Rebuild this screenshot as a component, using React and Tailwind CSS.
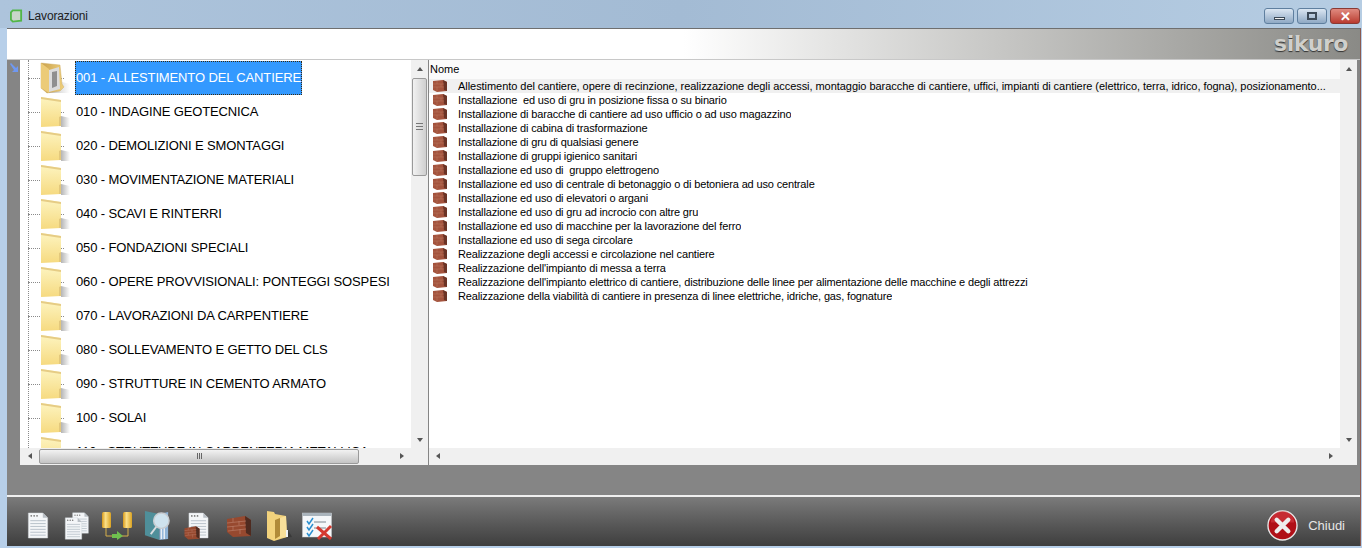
const gruppi = [
  '001 - ALLESTIMENTO DEL CANTIERE',
  '010 - INDAGINE GEOTECNICA',
  '020 - DEMOLIZIONI E SMONTAGGI',
  '030 - MOVIMENTAZIONE MATERIALI',
  '040 - SCAVI E RINTERRI',
  '050 - FONDAZIONI SPECIALI',
  '060 - OPERE PROVVISIONALI: PONTEGGI SOSPESI',
  '070 - LAVORAZIONI DA CARPENTIERE',
  '080 - SOLLEVAMENTO E GETTO DEL CLS',
  '090 - STRUTTURE IN CEMENTO ARMATO',
  '100 - SOLAI',
  '110 - STRUTTURE IN CARPENTERIA METALLICA',
];

const lavorazioni = [
  'Allestimento del cantiere, opere di recinzione, realizzazione degli accessi, montaggio baracche di cantiere, uffici, impianti di cantiere (elettrico, terra, idrico, fogna), posizionamento...',
  'Installazione  ed uso di gru in posizione fissa o su binario',
  'Installazione di baracche di cantiere ad uso ufficio o ad uso magazzino',
  'Installazione di cabina di trasformazione',
  'Installazione di gru di qualsiasi genere',
  'Installazione di gruppi igienico sanitari',
  'Installazione ed uso di  gruppo elettrogeno',
  'Installazione ed uso di centrale di betonaggio o di betoniera ad uso centrale',
  'Installazione ed uso di elevatori o argani',
  'Installazione ed uso di gru ad incrocio con altre gru',
  'Installazione ed uso di macchine per la lavorazione del ferro',
  'Installazione ed uso di sega circolare',
  'Realizzazione degli accessi e circolazione nel cantiere',
  "Realizzazione dell'impianto di messa a terra",
  "Realizzazione dell'impianto elettrico di cantiere, distribuzione delle linee per alimentazione delle macchine e degli attrezzi",
  'Realizzazione della viabilità di cantiere in presenza di linee elettriche, idriche, gas, fognature',
];

function SvgDefs() {
  return (
    <svg className="absolute w-0 h-0">
      <defs>
        <linearGradient id="cartella" x1="0" y1="0" x2="0" y2="1">
          <stop offset="0" stopColor="#fdf4c0" />
          <stop offset="1" stopColor="#f6da80" />
        </linearGradient>
        <linearGradient id="cartella-scura" x1="0" y1="0" x2="1" y2="0">
          <stop offset="0" stopColor="#c9a04c" />
          <stop offset="1" stopColor="#efd07c" />
        </linearGradient>
        <linearGradient id="ombra" x1="0" y1="0" x2="1" y2="0">
          <stop offset="0" stopColor="#777" stopOpacity="0.55" />
          <stop offset="1" stopColor="#777" stopOpacity="0" />
        </linearGradient>
        <linearGradient id="cilindro" x1="0" y1="0" x2="1" y2="0">
          <stop offset="0" stopColor="#d89a1c" />
          <stop offset="0.4" stopColor="#fbe08a" />
          <stop offset="1" stopColor="#dba322" />
        </linearGradient>
      </defs>
    </svg>
  );
}

function Folder({ open, className }) {
  return (
    <svg viewBox="0 0 30 32" className={className}>
      {open ? (
        <>
          <path d="M6 31 L30 31 L30 22 L22 20 Z" fill="url(#ombra)" />
          <path d="M1 1 L20 3 L22 22 L24 25 L20 29 L7 31 L1 26 Z" fill="url(#cartella-scura)" stroke="#c8a55a" strokeWidth="0.4" />
          <path d="M9 8 L19 5 L20 27 L9 30 Z" fill="#dcdcdc" />
          <path d="M12 10 L17 9 L17 24 L12 26 Z" fill="#8f8f8f" />
          <path d="M1 1 L9 7 L9 31 L1 26 Z" fill="#eccb78" />
        </>
      ) : (
        <>
          <path d="M21 31 L30 31 L30 22 L21 20 Z" fill="url(#ombra)" />
          <path d="M1 1 L21 4 L21 30 L1 31 Z" fill="url(#cartella)" />
          <path d="M1 1 L21 4 L21 6 L1 3 Z" fill="#e6cc85" />
          <path d="M19 21 L21 20 L21 30 L19 30 Z" fill="#e3c87c" />
        </>
      )}
    </svg>
  );
}

function Brick({ className }) {
  return (
    <svg viewBox="0 0 14 12" className={className}>
      <path d="M0 1 L10 0 L14 2 L14 11 L4 12 L0 10 Z" fill="#a4533d" />
      <path d="M10 0 L14 2 L14 11 L11 10 Z" fill="#6b3426" />
      <path d="M0 4 H11 M0 7 H11 M4 1 V4 M8 4 V7 M4 7 V11" stroke="#b87860" strokeWidth="0.5" fill="none" />
    </svg>
  );
}

function Doc({ className }) {
  return (
    <svg viewBox="0 0 22 28" className={className}>
      <path d="M1 1 H16 L21 6 V27 H1 Z" fill="#f4f6f8" stroke="#cfd5da" strokeWidth="0.5" />
      <path d="M16 1 L21 6 H16 Z" fill="#b9bfc5" />
      <path d="M3 9 H19 M3 12 H19 M3 15 H19 M3 18 H19 M3 21 H19 M3 24 H19" stroke="#a9b4be" strokeWidth="0.8" />
      <circle cx="4" cy="4" r="0.9" fill="#777" />
      <circle cx="7" cy="4" r="0.9" fill="#777" />
      <circle cx="10" cy="4" r="0.9" fill="#777" />
    </svg>
  );
}

function WallBig({ className }) {
  return (
    <svg viewBox="0 0 26 24" className={className}>
      <path d="M1 5 L19 2 L25 6 L25 22 L7 23 L1 18 Z" fill="#97492f" />
      <path d="M19 2 L25 6 L25 22 L20 19 Z" fill="#4f2b20" />
      <path d="M1 9 L20 7 M1 13 L20 11 M2 17 L20 15 M7 4 V8 M13 7 V11 M7 12 V16 M14 15 V20" stroke="#c08470" strokeWidth="0.6" fill="none" />
    </svg>
  );
}

function Toolbar() {
  return (
    <div className="flex items-center h-[49px] pt-[8px] pl-[20px] pr-[15px] bg-gradient-to-b from-[#7b7b7b] to-[#3e3e3e]">
      <Doc className="w-[22px] h-[27px]" />
      <div className="relative w-[26px] h-[28px] ml-[15px]">
        <Doc className="absolute right-0 top-0 w-[19px] h-[22px]" />
        <Doc className="absolute left-0 bottom-0 w-[19px] h-[23px]" />
      </div>
      <svg viewBox="0 0 32 30" className="w-[32px] h-[30px] ml-[11px]">
        <rect x="1" y="1" width="9" height="16" rx="1.5" fill="url(#cilindro)" />
        <rect x="22" y="1" width="9" height="16" rx="1.5" fill="url(#cilindro)" />
        <path d="M5 17 V25 H27 V17" fill="none" stroke="#d6b04a" strokeWidth="1" />
        <path d="M11 23 H16 V20 L22 25 L16 29 V27 H11 Z" fill="#6fbf4f" />
      </svg>
      <svg viewBox="0 0 28 32" className="w-[27px] h-[31px] ml-[11px]">
        <path d="M1 1 L16 4 L16 31 L1 26 Z" fill="#4f8f9a" />
        <path d="M16 4 L25 2 L25 30 L16 31 Z" fill="#8fb4d8" />
        <path d="M18 16 V30 M21 16 V30" stroke="#e8eef5" strokeWidth="1.5" />
        <path d="M13 17 L7 25" stroke="#d8dce0" strokeWidth="2" />
        <circle cx="18" cy="11" r="8" fill="#cfe3ee" stroke="#c8ccd0" strokeWidth="1.5" />
      </svg>
      <div className="relative w-[26px] h-[28px] ml-[12px]">
        <Doc className="absolute right-0 top-0 w-[21px] h-[27px]" />
        <WallBig className="absolute left-0 bottom-0 w-[18px] h-[15px]" />
      </div>
      <WallBig className="w-[26px] h-[24px] ml-[17px]" />
      <svg viewBox="0 0 26 32" className="w-[26px] h-[32px] ml-[14px]">
        <path d="M14 28 L26 27 L22 20 Z" fill="#2e2e2e" opacity="0.6" />
        <path d="M1 1 L8 2 L9 4 L20 6 L21 27 L8 31 L1 28 Z" fill="#f2d27c" />
        <path d="M9 10 L14 8 L14 26 L9 29 Z" fill="#b08a38" />
        <path d="M14 8 L20 6 L21 27 L14 28 Z" fill="#f8e09a" />
        <path d="M20 20 L22 20 V27 H20 Z" fill="#eef3f8" />
      </svg>
      <svg viewBox="0 0 30 28" className="w-[30px] h-[28px] ml-[10px]">
        <rect x="0.5" y="1" width="29" height="24" fill="#f5f7f9" stroke="#c8ccd0" strokeWidth="0.5" />
        <rect x="0.5" y="1" width="29" height="3" fill="#aab4bc" />
        <path d="M5 9 L7 12 L11 6 M5 15 L7 18 L11 12 M5 21 L7 24 L11 18" stroke="#2a8fd0" strokeWidth="1.5" fill="none" />
        <path d="M12 10 H24 M12 16 H24" stroke="#7d8790" strokeWidth="1" />
        <path d="M15 15 L29 27 M29 14 L16 27" stroke="#d43a30" strokeWidth="3" />
      </svg>
      <div className="flex-1" />
      <div className="flex items-center gap-[10px]">
        <svg viewBox="0 0 32 32" className="w-[31px] h-[31px]">
          <circle cx="16" cy="16" r="15" fill="#b00f17" stroke="#e8e8e8" strokeWidth="1.4" />
          <path d="M4 13 A12 12 0 0 1 28 13 Z" fill="#d8434a" opacity="0.55" />
          <path d="M10 10 L22 22 M22 10 L10 22" stroke="#eeeeee" strokeWidth="4.5" strokeLinecap="round" />
        </svg>
        <span className="text-[13px] text-[#e6e6e6]">Chiudi</span>
      </div>
    </div>
  );
}

function WinButton({ className, children }) {
  return (
    <div className={`flex items-center justify-center w-[30px] h-[16px] rounded-[3px] border ${className}`}>
      {children}
    </div>
  );
}

function ScrollArrow({ dir }) {
  const points = { up: '1,6 4,2 7,6', down: '1,2 4,6 7,2', left: '6,1 2,4 6,7', right: '2,1 6,4 2,7' };
  return (
    <svg viewBox="0 0 8 8" className="w-[8px] h-[8px]">
      <polygon points={points[dir]} fill="#555" />
    </svg>
  );
}

function VScroll({ thumb }) {
  return (
    <div className="flex flex-col w-[17px] bg-[#f0f0f0]">
      <div className="flex items-center justify-center h-[18px]"><ScrollArrow dir="up" /></div>
      <div className="flex-1">
        {thumb && (
          <div className="flex items-center justify-center h-[98px] mx-[1px] rounded-[2px] border border-[#9a9a9a] bg-gradient-to-r from-[#f2f2f2] to-[#cfcfcf]">
            <div className="w-[7px] h-[7px] border-y border-[#777] flex items-center"><div className="w-full h-px bg-[#777]" /></div>
          </div>
        )}
      </div>
      <div className="flex items-center justify-center h-[16px]"><ScrollArrow dir="down" /></div>
    </div>
  );
}

function TreePanel() {
  return (
    <div className="flex flex-col w-[408px] bg-white">
      <div className="flex flex-1 min-h-0">
        <div className="relative flex-1 overflow-hidden pt-px">
          <div className="absolute left-[8px] top-0 bottom-0 border-l border-dotted border-[#8a8a8a]" />
          {gruppi.map((g, i) => (
            <div key={g} className="relative flex items-center h-[34px] pl-[20px]">
              <div className="w-[36px] border-t border-dotted border-[#8a8a8a] absolute left-[8px] top-[17px]" />
              <Folder open={i === 0} className="relative w-[30px] h-[32px] shrink-0" />
              <span
                className={`relative ml-[5px] flex items-center h-[34px] border text-[13px] tracking-[-0.13px] whitespace-nowrap ${
                  i === 0 ? 'bg-[#3399ff] text-white border-dotted border-[#3a2a10]' : 'border-white text-black'
                }`}
              >
                {g}
              </span>
            </div>
          ))}
        </div>
        <VScroll thumb />
      </div>
      <div className="flex items-center h-[17px] bg-[#f0f0f0]">
        <div className="flex items-center justify-center w-[19px]"><ScrollArrow dir="left" /></div>
        <div className="flex items-center justify-center gap-px w-[320px] h-[15px] rounded-[2px] border border-[#9a9a9a] bg-gradient-to-b from-[#f2f2f2] to-[#c4c4c4]">
          <div className="w-px h-[6px] bg-[#666]" />
          <div className="w-px h-[6px] bg-[#666]" />
          <div className="w-px h-[6px] bg-[#666]" />
        </div>
        <div className="flex-1 flex justify-end pr-[5px]"><ScrollArrow dir="right" /></div>
        <div className="w-[17px]" />
      </div>
    </div>
  );
}

function ListPanel() {
  return (
    <div className="flex flex-col flex-1 bg-white">
      <div className="flex flex-1 min-h-0">
        <div className="flex-1 min-w-0">
          <div className="h-[19px] pl-px text-[11px] leading-[19px] text-black bg-[#fbfbfb]">Nome</div>
          {lavorazioni.map((l, i) => (
            <div key={i} className={`flex items-center h-[14px] pl-[4px] ${i === 0 ? 'bg-[#f0f0f0]' : ''}`}>
              <Brick className="w-[14px] h-[12px] shrink-0" />
              <span className={`ml-[11px] text-[11px] leading-[14px] whitespace-pre truncate text-black ${i === 0 ? 'tracking-[-0.05px]' : 'tracking-[-0.15px]'}`}>{l}</span>
            </div>
          ))}
        </div>
        <VScroll />
      </div>
      <div className="flex items-center justify-between h-[17px] pl-[5px] pr-[22px] bg-[#f0f0f0]">
        <ScrollArrow dir="left" />
        <ScrollArrow dir="right" />
      </div>
    </div>
  );
}

export default function App() {
  return (
    <div className="flex flex-col w-[1362px] h-[548px] overflow-hidden bg-[#b7cfe9] font-['Liberation_Sans',Arial,sans-serif]">
      <SvgDefs />
      <div className="flex items-center h-[28px] pt-[4px] pl-[10px] pr-[2px] bg-gradient-to-r from-[#adc4dc] via-[#a3bbd4] to-[#b6cde3]">
        <svg viewBox="0 0 14 14" className="w-[13px] h-[14px]">
          <path d="M3 1 H12 V12 L3 13 L1 11 V3 Z" fill="#c9d6c9" stroke="#52b648" strokeWidth="2" />
        </svg>
        <span className="ml-[5px] text-[12px] tracking-[-0.15px] text-[#202020]">Lavorazioni</span>
        <div className="flex-1" />
        <div className="flex gap-[3px]">
          <WinButton className="border-[#5f7f9f] bg-gradient-to-b from-[#dbe6f2] to-[#8fa9c4]">
            <div className="w-[11px] h-[3px] mt-[5px] bg-[#f2f2f2] border border-[#3c4a58]" />
          </WinButton>
          <WinButton className="border-[#5f7f9f] bg-gradient-to-b from-[#dbe6f2] to-[#8fa9c4]">
            <div className="w-[10px] h-[8px] bg-transparent border-2 border-[#3c4a58]" />
          </WinButton>
          <WinButton className="border-[#8a3a34] bg-gradient-to-b from-[#e08a80] to-[#b93a30]">
            <span className="text-[13px] leading-none font-bold text-white">✕</span>
          </WinButton>
        </div>
      </div>

      <div className="flex flex-col flex-1 min-h-0 ml-[7px] mr-[1px] mb-[2px] border-t border-r border-t-[#6f6f6f] border-r-[#8a5a50] bg-[#858585]">
        <div className="flex items-center justify-end h-[30px] pr-[12px] bg-gradient-to-r from-white via-white to-[#8a8a86]">
          <span className="text-[22px] leading-none font-bold tracking-[-0.5px] font-['DejaVu_Sans',sans-serif] text-[#cfcfcb] [text-shadow:0_1px_1px_#333]">sikuro</span>
        </div>

        <div className="flex h-[406px] border-t border-[#c8c8c8]">
          <div className="w-[13px] pt-[3px] pl-[3px]">
            <svg viewBox="0 0 10 10" className="w-[10px] h-[10px]">
              <path d="M0 1 L1 0 L6 5 L8 3 V9 H2 L4 7 Z" fill="#6f98f2" />
            </svg>
          </div>
          <TreePanel />
          <div className="w-px" />
          <ListPanel />
          <div className="w-[3px]" />
        </div>

        <div className="h-[31px]" />
        <div className="h-[2px] bg-[#f0f0f0]" />
        <Toolbar />
      </div>
    </div>
  );
}
